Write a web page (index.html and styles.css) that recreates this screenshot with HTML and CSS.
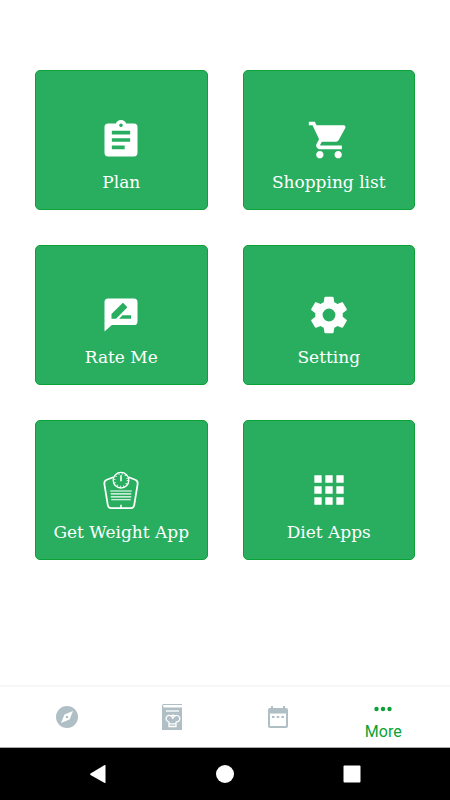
FILE: index.html
```
<!DOCTYPE html>
<html lang="en">
<head>
    <meta charset="UTF-8">
    <meta name="viewport" content="width=device-width, initial-scale=1.0">
    <title>More</title>
    <link rel="stylesheet" href="styles.css">
</head>
<body>
    <main class="menu">
        <button class="card" type="button">
            <svg class="card-icon" viewBox="0 0 24 24" aria-hidden="true">
                <path d="M19 3h-4.2a3 3 0 0 0-5.6 0H5a2 2 0 0 0-2 2v14a2 2 0 0 0 2 2h14a2 2 0 0 0 2-2V5a2 2 0 0 0-2-2zm-7 0a1 1 0 1 1 0 2 1 1 0 0 1 0-2zm2 14H7v-2h7v2zm3-4H7v-2h10v2zm0-4H7V7h10v2z"/>
            </svg>
            <span class="card-label">Plan</span>
        </button>
        <button class="card" type="button">
            <svg class="card-icon" viewBox="0 0 24 24" aria-hidden="true">
                <path d="M7 18c-1.100 0-1.990.9-1.990 2S5.900 22 7 22s2-.9 2-2-.9-2-2-2zM1 2v2h2l3.600 7.590-1.350 2.450c-.16.28-.25.61-.25.96 0 1.100.9 2 2 2h12v-2H7.420c-.14 0-.25-.11-.25-.25l.03-.12.9-1.630h7.450c.75 0 1.410-.41 1.750-1.030l3.580-6.490A1 1 0 0 0 20 4H5.210l-.94-2H1zm16 16c-1.100 0-1.990.9-1.990 2s.89 2 1.990 2 2-.9 2-2-.9-2-2-2z"/>
            </svg>
            <span class="card-label">Shopping list</span>
        </button>
        <button class="card" type="button">
            <svg class="card-icon" viewBox="0 0 24 24" aria-hidden="true">
                <path fill-rule="evenodd" d="M5 3h14a2 2 0 0 1 2 2v10.500a2 2 0 0 1-2 2H7L3 21V5a2 2 0 0 1 2-2zM6.800 14h2.500l5.800-5.800c.3-.3.3-.6 0-.9l-1.600-1.600c-.3-.3-.6-.3-.9 0l-5.800 5.800zM17.500 14v-1.800h-4.700L11 14z"/>
            </svg>
            <span class="card-label">Rate Me</span>
        </button>
        <button class="card" type="button">
            <svg class="card-icon" viewBox="0 0 24 24" aria-hidden="true">
                <path d="M19.430 12.980c.04-.32.07-.64.07-.98s-.03-.66-.07-.98l2.110-1.650c.19-.15.24-.42.12-.64l-2-3.460c-.12-.22-.39-.3-.61-.22l-2.490 1c-.52-.4-1.080-.73-1.690-.98l-.38-2.650A.49.49 0 0 0 14 2h-4c-.25 0-.46.18-.49.42l-.38 2.650c-.61.25-1.170.59-1.690.98l-2.490-1c-.23-.09-.49 0-.61.22l-2 3.460c-.13.22-.07.49.12.64l2.110 1.650c-.04.32-.07.65-.07.98s.03.66.07.98l-2.110 1.650c-.19.15-.24.42-.12.64l2 3.460c.12.22.39.3.61.22l2.490-1c.52.4 1.080.73 1.690.98l.38 2.650c.03.24.24.42.49.42h4c.25 0 .46-.18.49-.42l.38-2.650c.61-.25 1.170-.59 1.690-.98l2.490 1c.23.09.49 0 .61-.22l2-3.460c.12-.22.07-.49-.12-.64l-2.110-1.650zM12 15.500a3.500 3.500 0 1 1 0-7 3.500 3.500 0 0 1 0 7z"/>
            </svg>
            <span class="card-label">Setting</span>
        </button>
        <button class="card" type="button">
            <svg class="card-icon" viewBox="0 0 45 45" aria-hidden="true">
                <g class="line">
                    <path stroke-width="1.800" d="M14.500 9.500L8 12Q5 13 5.500 16.500l3.500 21.500q.5 3 3.500 3h20q3 0 3.500-3L39.500 16.500q.5-3.500-2.500-4.500l-6.500-2.500"/>
                    <circle cx="22.500" cy="12.500" r="8" stroke-width="1.400"/>
                    <circle cx="22.500" cy="12.500" r="6.500" stroke-width="1.500" stroke-dasharray=".9 2.500"/>
                    <path stroke-width="1.600" d="M22.500 7.500v6M22.500 37.500V41"/>
                    <path stroke-width="1.100" d="M11.500 23.500h22M12 26.500h21M12 29.500h21M12.500 32.500h20"/>
                </g>
            </svg>
            <span class="card-label">Get Weight App</span>
        </button>
        <button class="card" type="button">
            <svg class="card-icon" viewBox="0 0 24 24" aria-hidden="true">
                <path d="M4 8h4V4H4v4zm6 12h4v-4h-4v4zm-6 0h4v-4H4v4zm0-6h4v-4H4v4zm6 0h4v-4h-4v4zm6-10v4h4V4h-4zm-6 4h4V4h-4v4zm6 6h4v-4h-4v4zm0 6h4v-4h-4v4z"/>
            </svg>
            <span class="card-label">Diet Apps</span>
        </button>
    </main>

    <nav class="tabs">
        <a class="tab" href="#explore" aria-label="Explore">
            <svg class="tab-icon" viewBox="0 0 26 26" aria-hidden="true">
                <path fill-rule="evenodd" d="M13 2a11 11 0 1 0 0 22 11 11 0 0 0 0-22zM19 7l-3.500 8.500L7 19l3.500-8.500zM13 11.700a1.300 1.300 0 1 0 0 2.600 1.300 1.300 0 0 0 0-2.600z"/>
            </svg>
        </a>
        <a class="tab" href="#recipes" aria-label="Recipes">
            <svg class="tab-icon" viewBox="0 0 26 26" aria-hidden="true">
                <path d="M3 1.500Q3 0 4.500 0H23v1H5q-1 0-1 1t1 1.500h18V26H3z"/>
                <g class="cutout">
                    <path d="M7 7h13"/>
                    <path d="M10 17.800v4.700h7v-4.700M10 17.800a3.200 3.200 0 1 1 2.500-5.500q1.200 1 1 2.500M17 17.800a3.200 3.200 0 1 0-1-5.900q-2 .8-2 2.500M12 12q2-1.500 4 0M10 19.800h7"/>
                </g>
            </svg>
        </a>
        <a class="tab" href="#calendar" aria-label="Calendar">
            <svg class="tab-icon" viewBox="0 0 26 26" aria-hidden="true">
                <path fill-rule="evenodd" d="M5 4h1V2h2v2h10V2h2v2h1a2 2 0 0 1 2 2v16a2 2 0 0 1-2 2H5a2 2 0 0 1-2-2V6a2 2 0 0 1 2-2zM5 9.500V22h16V9.500zM7 12h2.500v2H7zM11.700 12h2.500v2h-2.500zM16.500 12h2.500v2h-2.500z"/>
            </svg>
        </a>
        <a class="tab active" href="#more">
            <svg class="tab-icon" viewBox="0 0 26 26" aria-hidden="true">
                <circle cx="6.500" cy="13" r="2.200"/>
                <circle cx="13" cy="13" r="2.200"/>
                <circle cx="19.500" cy="13" r="2.200"/>
            </svg>
            <span>More</span>
        </a>
    </nav>

    <!-- Android system keys -->
    <div class="system-bar">
        <button class="key" type="button" aria-label="Back">
            <svg viewBox="0 0 20 20" aria-hidden="true"><path d="M17.500 1.500v17q0 .8-.8.400L2.500 11q-1-.8 0-1.600L16.700 1q.8-.3.8.5z"/></svg>
        </button>
        <button class="key" type="button" aria-label="Home">
            <svg viewBox="0 0 20 20" aria-hidden="true"><circle cx="10" cy="10" r="9"/></svg>
        </button>
        <button class="key" type="button" aria-label="Recent apps">
            <svg viewBox="0 0 20 20" aria-hidden="true"><rect x="1.500" y="1.500" width="17" height="17" rx="1"/></svg>
        </button>
    </div>
</body>
</html>
```
FILE: styles.css
```
* {
    box-sizing: border-box;
}
body {
    display: flex;
    flex-direction: column;
    min-height: 100vh;
    margin: 0;
    background: #fff;
    font-family: Roboto, sans-serif;
}
button {
    border: none;
    padding: 0;
    background: none;
    font: inherit;
    cursor: pointer;
}
svg {
    display: block;
    fill: currentColor;
}

/* Menu cards */
.menu {
    flex: 1;
    display: grid;
    grid-template-columns: 1fr 1fr;
    grid-auto-rows: 140px;
    gap: 35px;
    padding: 70px 35px 35px;
}
.card {
    display: flex;
    flex-direction: column;
    align-items: center;
    justify-content: flex-end;
    gap: 8px;
    padding-bottom: 15px;
    border: 1px solid #0ca136;
    border-radius: 5px;
    background: #29ae60;
    color: #fff;
}
.card-icon {
    width: 44px;
    height: 44px;
}
.card-label {
    font-family: "DejaVu Serif", serif;
    font-size: 17px;
    line-height: 24px;
    white-space: nowrap;
}
.line {
    fill: none;
    stroke: currentColor;
}

/* Bottom tabs */
.tabs {
    display: flex;
    height: 63px;
    padding: 0 14px;
    border-top: 2px solid #f6f6f6;
    border-bottom: 1px solid #a9a9a9;
}
.tab {
    flex: 1;
    display: flex;
    flex-direction: column;
    align-items: center;
    justify-content: center;
    color: #b0bec5;
    font-size: 16px;
    line-height: 20px;
    text-decoration: none;
}
.tab-icon {
    width: 26px;
    height: 26px;
}
.active {
    padding-top: 3px;
    color: #0ca136;
}
.cutout {
    fill: none;
    stroke: #fff;
    stroke-width: 1.3;
}

/* System bar */
.system-bar {
    display: grid;
    grid-template-columns: repeat(3, 1fr);
    height: 52px;
    padding: 0 35px;
    background: #000;
}
.key {
    display: flex;
    align-items: center;
    justify-content: center;
    color: #fff;
}
.key svg {
    width: 20px;
    height: 20px;
}
```
